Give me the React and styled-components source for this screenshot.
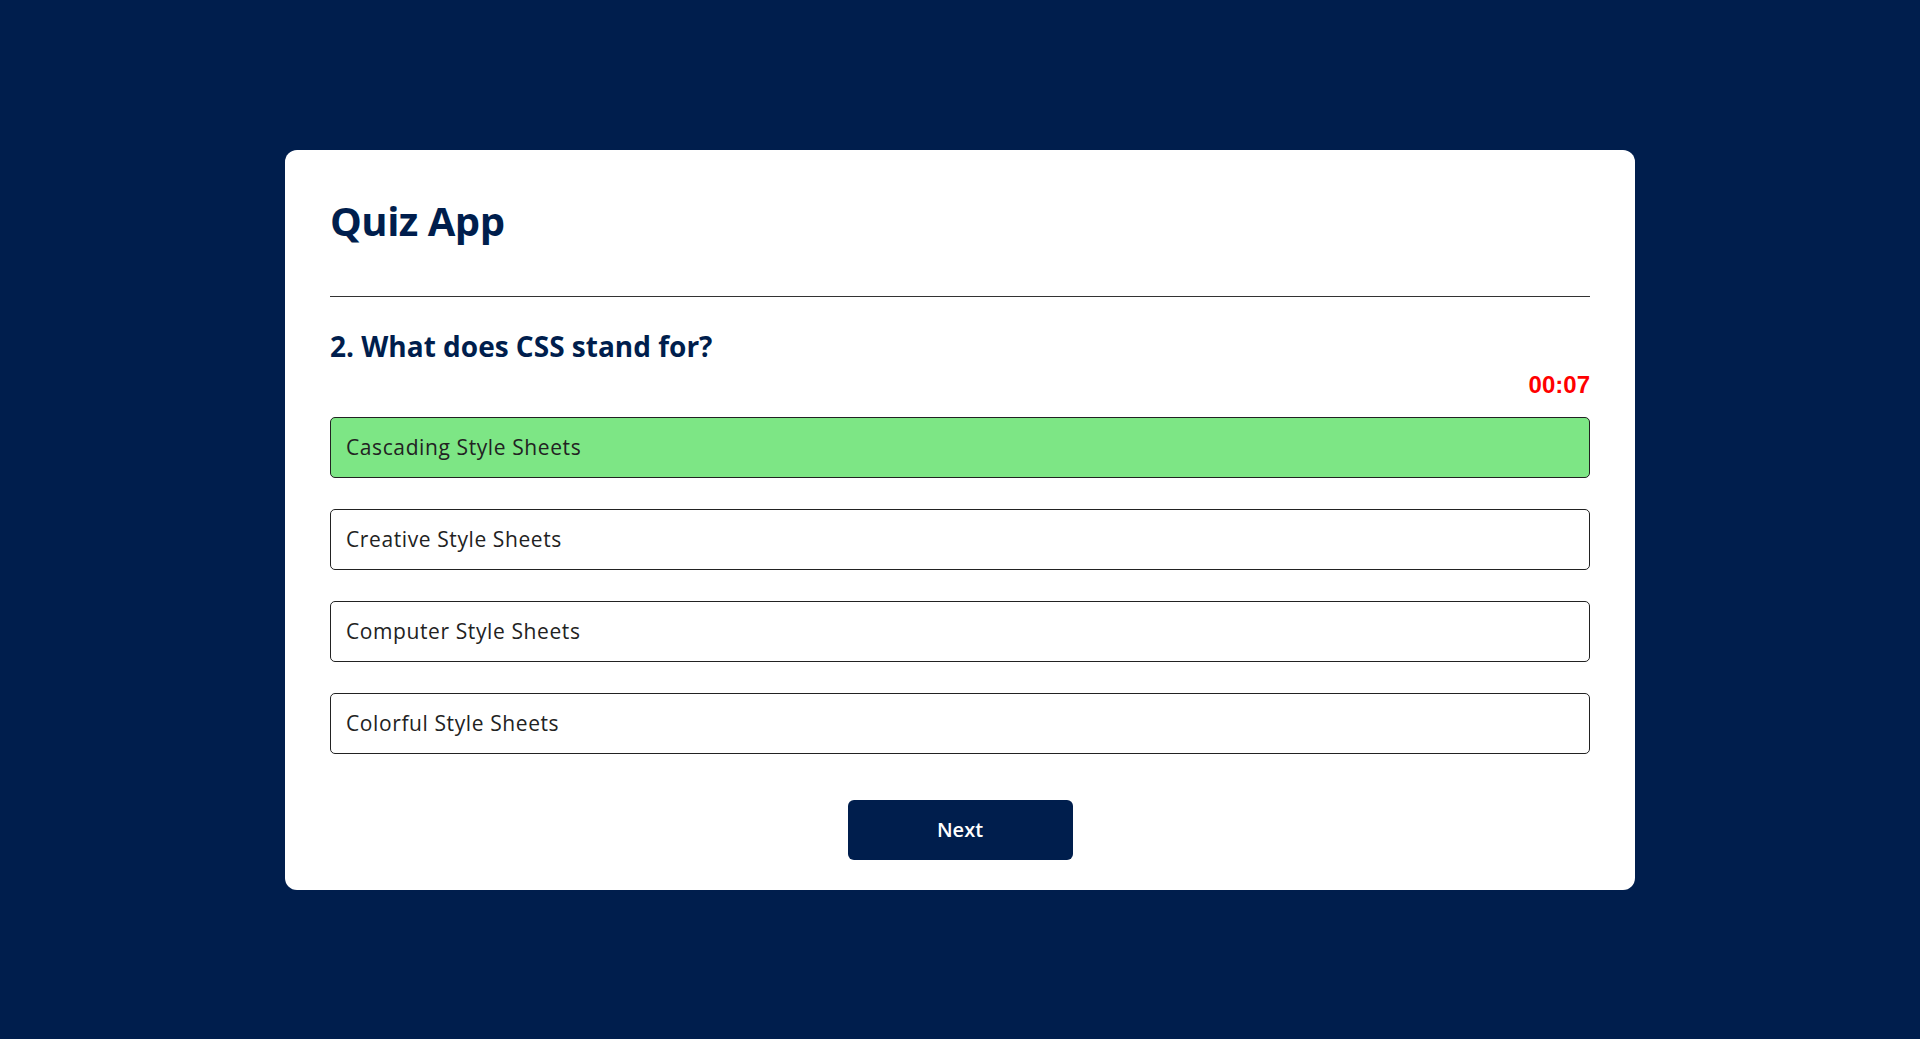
import styled, { createGlobalStyle } from "styled-components";
import { useState } from "react";

const GlobalStyle = createGlobalStyle`
  * {
    box-sizing: border-box;
  }
  body {
    margin: 0;
    background: #001e4d;
    font-family: "Open Sans", "Liberation Sans", sans-serif;
  }
`;
const Page = styled.div`
  min-height: 100vh;
  display: flex;
  align-items: center;
  justify-content: center;
`;
const Card = styled.div`
  width: 1350px;
  background: #fff;
  border-radius: 12px;
  padding: 45px 45px 30px;
`;
const Title = styled.h1`
  margin: 0;
  font-size: 40px;
  line-height: 48px;
  font-weight: 700;
  letter-spacing: -0.5px;
  color: #001e4d;
  padding: 2px 0 51px;
  border-bottom: 1px solid #333;
`;
const Question = styled.h2`
  margin: 32px 0 0;
  font-size: 28px;
  line-height: 34px;
  font-weight: 700;
  color: #001e4d;
`;
const Timer = styled.div`
  margin-top: 7px;
  text-align: right;
  font-family: "Liberation Sans", Arial, sans-serif;
  font-weight: 700;
  font-size: 24px;
  line-height: 29px;
  color: #ff0000;
`;
const Answers = styled.div`
  display: flex;
  flex-direction: column;
  gap: 31px;
  margin-top: 18px;
`;
const Answer = styled.button`
  height: 61px;
  width: 100%;
  display: flex;
  align-items: center;
  padding: 0 15px;
  border: 1px solid #222;
  border-radius: 5px;
  background: ${(p) => (p.$correct ? "#7de685" : "#fff")};
  color: #222;
  font-family: inherit;
  font-size: 21px;
  font-weight: 500;
  letter-spacing: 0.6px;
  text-align: left;
  cursor: pointer;
`;
const Footer = styled.div`
  display: flex;
  justify-content: center;
  margin-top: 46px;
`;
const NextButton = styled.button`
  width: 225px;
  height: 60px;
  border: none;
  border-radius: 6px;
  background: #001e4d;
  color: #fff;
  font-family: inherit;
  font-size: 20px;
  font-weight: 600;
  cursor: pointer;
`;

const answers = [
  { text: "Cascading Style Sheets", correct: true },
  { text: "Creative Style Sheets", correct: false },
  { text: "Computer Style Sheets", correct: false },
  { text: "Colorful Style Sheets", correct: false },
];

export default function App() {
  const [picked, setPicked] = useState(0);
  return (
    <>
      <GlobalStyle />
      <Page>
        <Card>
          <Title>Quiz App</Title>
          <Question>2. What does CSS stand for?</Question>
          <Timer>00:07</Timer>
          <Answers>
            {answers.map((a, i) => (
              <Answer
                key={a.text}
                $correct={picked !== null && a.correct}
                onClick={() => setPicked(i)}
              >
                {a.text}
              </Answer>
            ))}
          </Answers>
          <Footer>
            <NextButton>Next</NextButton>
          </Footer>
        </Card>
      </Page>
    </>
  );
}
